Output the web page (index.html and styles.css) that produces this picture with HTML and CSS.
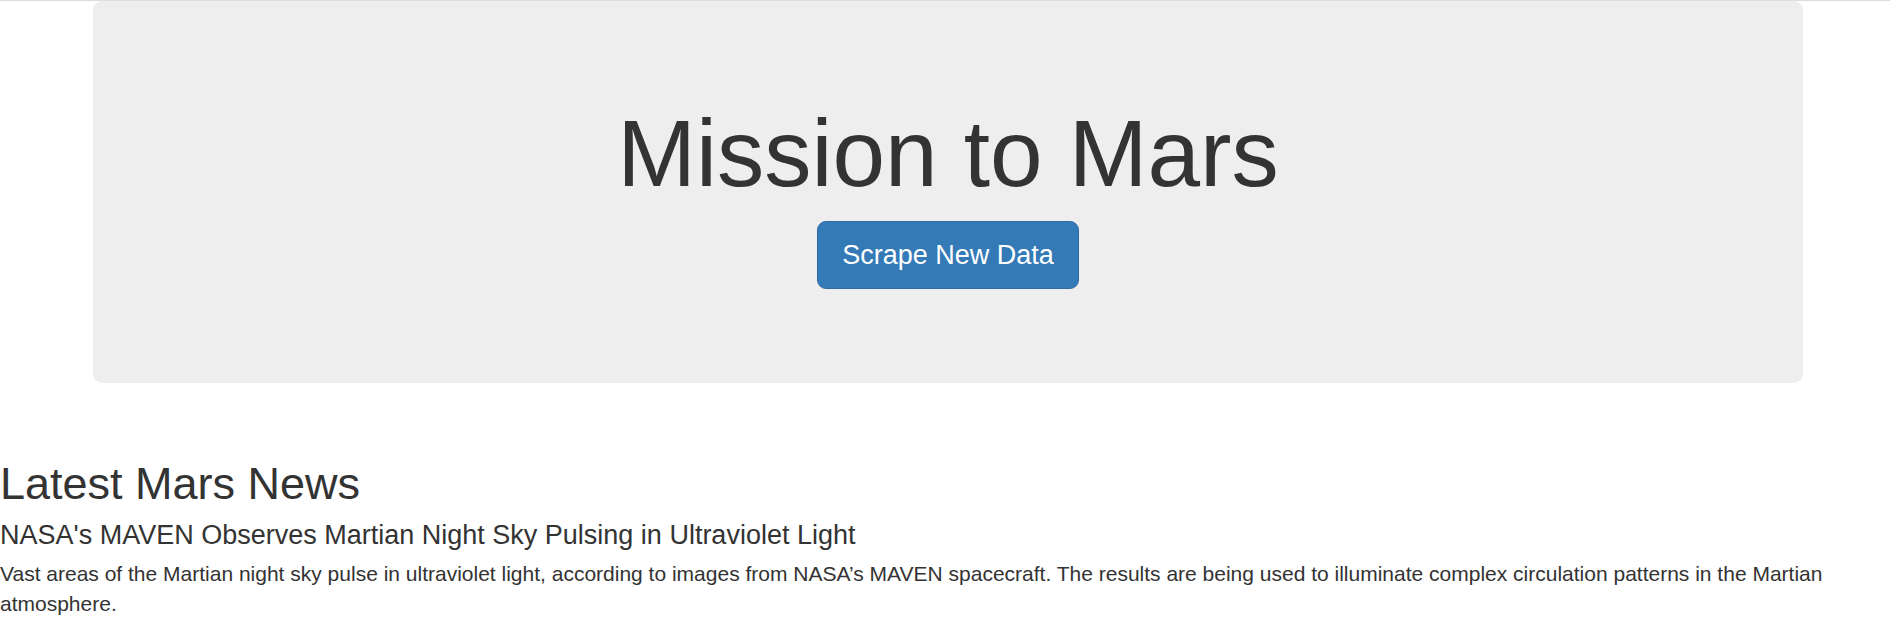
FILE: index.html
```html
<!DOCTYPE html>
<html lang="en">
<head>
<meta charset="utf-8">
<title>Mission to Mars</title>
<link rel="stylesheet" href="styles.css">
</head>
<body>
<div class="page">
  <div class="jumbotron">
    <h1 class="title">Mission to Mars</h1>
    <p class="actions"><a class="btn" href="#">Scrape New Data</a></p>
  </div>
  <section class="news">
    <h2 class="news-heading">Latest Mars News</h2>
    <h4 class="news-title">NASA's MAVEN Observes Martian Night Sky Pulsing in Ultraviolet Light</h4>
    <p class="news-body">Vast areas of the Martian night sky pulse in ultraviolet light, according to images from NASA’s MAVEN spacecraft. The results are being used to illuminate complex circulation patterns in the Martian atmosphere.</p>
  </section>
</div>
</body>
</html>
```

FILE: styles.css
```css
html, body {
  margin: 0;
  padding: 0;
  background: #fff;
}

body {
  font-family: "Liberation Sans", Arial, Helvetica, sans-serif;
  font-size: 21px;
  line-height: 30px;
  color: #333;
}

.page {
  border-top: 1px solid #dddde0;
}

.jumbotron {
  margin: 0 0 45px 93px;
  width: 1710px;
  box-sizing: border-box;
  padding: 72px 90px;
  background: #eee;
  border-radius: 9px;
  text-align: center;
}

.title {
  margin: 29px 0 15px;
  font-size: 94.5px;
  line-height: 1.1;
  font-weight: 500;
  color: #333;
}

.actions {
  margin: 0 0 22.5px;
  display: flex;
  justify-content: center;
}

.btn {
  display: block;
  padding: 15px 24px;
  font-size: 27px;
  line-height: 36px;
  color: #fff;
  background: #337ab7;
  border: 1px solid #2e6da4;
  border-radius: 9px;
  text-decoration: none;
}

.news {
  padding: 31px 0 0;
}

.news-heading {
  margin: 0 0 12px;
  font-size: 45px;
  line-height: 1.1;
  font-weight: 500;
}

.news-title {
  margin: 0 0 8.5px;
  font-size: 27px;
  line-height: 1.1;
  font-weight: 500;
}

.news-body {
  margin: 0;
  font-size: 21px;
  line-height: 30px;
}
```
